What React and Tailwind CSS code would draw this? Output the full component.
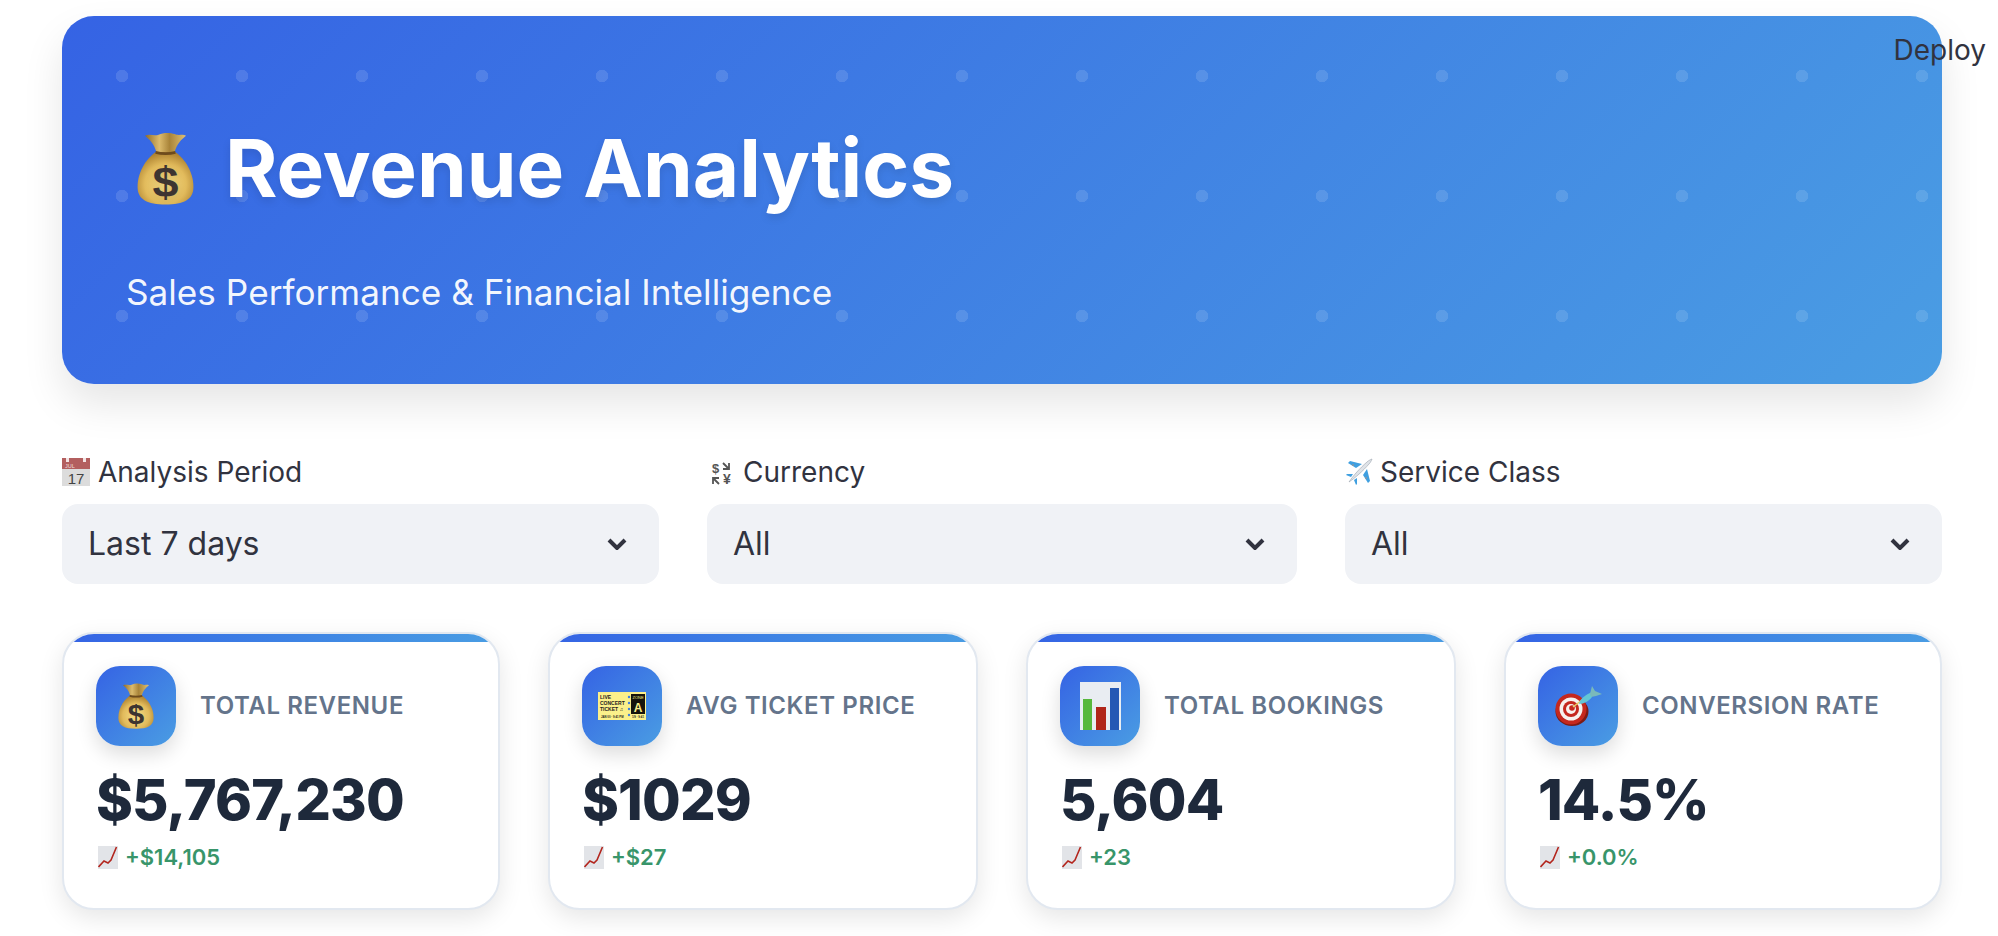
function Grads() {
  return (
    <svg width="0" height="0" className="absolute">
      <defs>
        <radialGradient id="bagBody" cx="50%" cy="62%" r="62%">
          <stop offset="0%" stopColor="#f7de86" />
          <stop offset="60%" stopColor="#e2bb5c" />
          <stop offset="100%" stopColor="#a87c2c" />
        </radialGradient>
        <linearGradient id="bagTop" x1="0" y1="0" x2="1" y2="0">
          <stop offset="0%" stopColor="#8d6a2a" />
          <stop offset="35%" stopColor="#dcbb6c" />
          <stop offset="60%" stopColor="#a98439" />
          <stop offset="100%" stopColor="#e0c274" />
        </linearGradient>
      </defs>
    </svg>
  );
}

function MoneyBag({ className }) {
  return (
    <svg viewBox="0 0 100 138" preserveAspectRatio="none" className={className}>
      <path d="M36 36 C20 46 1 72 1 104 C1 128 18 137 50 137 C82 137 99 128 99 104 C99 72 80 46 64 36Z" fill="url(#bagBody)" />
      <path d="M14 7 C22 3 30 8 38 5 C46 1 58 1 66 4 C74 8 80 3 86 7 C78 14 70 22 66 38 L34 38 C30 22 22 14 14 7Z" fill="url(#bagTop)" />
      <path d="M33 36 Q50 41 67 36 L68 41 Q50 46 32 41Z" fill="#6d4b1d" />
      <text x="50" y="122" textAnchor="middle" fontSize="82" fontWeight="700" fill="#3d3431" fontFamily="Liberation Sans, sans-serif">$</text>
    </svg>
  );
}

function CalendarIcon() {
  return (
    <svg viewBox="0 0 28 28" className="h-7 w-7 shrink-0">
      <rect x="0" y="0" width="28" height="28" fill="#dcdcdc" />
      <rect x="0" y="0" width="28" height="11" fill="#b35f5f" />
      <rect x="4" y="0" width="3" height="4" fill="#f3e4e4" />
      <rect x="21" y="0" width="3" height="4" fill="#f3e4e4" />
      <text x="3" y="9.5" fontSize="5.5" fill="#efdcdc" fontFamily="Liberation Sans, sans-serif">JUL</text>
      <text x="14" y="26" textAnchor="middle" fontSize="15" fill="#444" fontFamily="Liberation Sans, sans-serif">17</text>
    </svg>
  );
}

function ExchangeIcon() {
  return (
    <svg viewBox="0 -1 23 27" className="h-[27px] w-[23px] shrink-0">
      <text x="5.5" y="11" textAnchor="middle" fontSize="13" fontWeight="700" fill="#555" fontFamily="Liberation Sans, sans-serif">$</text>
      <text x="17" y="22" textAnchor="middle" fontSize="14" fontWeight="700" fill="#555" fontFamily="Liberation Sans, sans-serif">¥</text>
      <path d="M13 1l6 6M19 1v6h-6" fill="none" stroke="#555" strokeWidth="1.8" />
      <path d="M9 22l-6-6M3 22v-6h6" fill="none" stroke="#555" strokeWidth="1.8" />
    </svg>
  );
}

function PlaneIcon() {
  return (
    <svg viewBox="0 0 28 28" className="h-7 w-7 shrink-0">
      <path d="M11 10 L3 5 L5 3 L17 6Z" fill="#3f9fe0" />
      <path d="M18 17 L23 25 L25 23 L22 11Z" fill="#3f9fe0" />
      <path d="M6 19 L1 17 L2 16 L8 16Z" fill="#3f9fe0" />
      <path d="M9 22 L11 27 L12 26 L12 20Z" fill="#3f9fe0" />
      <path d="M4 24 C8 18 15 10 22 4 C24 2 27 1 27 1 C27 1 26 4 24 6 C18 13 10 20 4 24Z" fill="#dfe3e8" stroke="#9aa3ad" strokeWidth="0.6" />
      <circle cx="8" cy="7" r="1" fill="#8c96a0" />
      <circle cx="21" cy="20" r="1" fill="#8c96a0" />
    </svg>
  );
}

function TicketIcon() {
  return (
    <svg viewBox="0 0 48 28" className="h-7 w-12">
      <rect width="48" height="28" fill="#fbf08a" />
      <rect x="33" y="2" width="14" height="20" fill="#15130c" />
      <text x="40" y="7" textAnchor="middle" fontSize="4" fill="#fbf08a" fontFamily="Liberation Sans, sans-serif">ZONE</text>
      <text x="40" y="20" textAnchor="middle" fontSize="12" fontWeight="700" fill="#fbf08a" fontFamily="Liberation Sans, sans-serif">A</text>
      <g fontSize="5" fontWeight="700" fill="#222" fontFamily="Liberation Sans, sans-serif">
        <text x="2" y="7">LIVE</text>
        <text x="2" y="13">CONCERT</text>
        <text x="2" y="19">TICKET ♫</text>
      </g>
      <text x="3" y="26" fontSize="2.8" fontWeight="700" fill="#222" fontFamily="Liberation Sans, sans-serif">JAN 00 · 9:41 PM</text>
      <text x="34" y="26" fontSize="2.8" fontWeight="700" fill="#222" fontFamily="Liberation Sans, sans-serif">1/9 · 9:41</text>
      <g fill="#3f7fe0">
        <circle cx="31" cy="5" r="1.2" />
        <circle cx="31" cy="11" r="1.2" />
        <circle cx="31" cy="17" r="1.2" />
        <circle cx="31" cy="23" r="1.2" />
      </g>
    </svg>
  );
}

function BarsIcon() {
  return (
    <svg viewBox="0 0 41 48" className="h-12 w-[41px]">
      <rect width="41" height="48" fill="#e9edf2" />
      <rect x="3" y="17" width="9" height="31" fill="#58b83d" />
      <rect x="16" y="25" width="10" height="23" fill="#b0261a" />
      <rect x="30" y="6" width="9" height="42" fill="#2458b4" />
    </svg>
  );
}

function DartIcon() {
  return (
    <svg viewBox="0 0 48 40" className="h-10 w-12">
      <ellipse cx="18" cy="25.5" rx="16.5" ry="14.5" fill="#7e1a14" />
      <circle cx="17" cy="23" r="15.5" fill="#c5281e" />
      <circle cx="17" cy="23" r="11.5" fill="#f7f2ee" />
      <circle cx="17" cy="23" r="8" fill="#c5281e" />
      <circle cx="17" cy="23" r="5" fill="#f7f2ee" />
      <circle cx="18" cy="22" r="2.8" fill="#c5281e" />
      <path d="M19 21 L28 14" stroke="#e6cf63" strokeWidth="1.5" />
      <path d="M25 18 C26 12 34 7 39 6 L38 11 C35 15 30 18 25 18Z" fill="#62c6d6" />
      <path d="M36 8 L38 0 L41 5 L48 8 L42 10 L37 11Z" fill="#7ab9ba" />
    </svg>
  );
}

function ChartUpIcon() {
  return (
    <svg viewBox="0 0 20 23" className="ml-0.5 h-[23px] w-5 shrink-0">
      <rect width="20" height="23" fill="#e2e4e8" />
      <path d="M0.5 21 L6 15 L10 17 L13 14 L18.5 1" fill="none" stroke="#b3261e" strokeWidth="1.6" />
    </svg>
  );
}

function Chevron() {
  return (
    <svg viewBox="0 0 20 12" className="h-3 w-5">
      <path d="M2 2 L10 10 L18 2" fill="none" stroke="#31333f" strokeWidth="4" />
    </svg>
  );
}

function Filter({ icon, label, value }) {
  return (
    <div>
      <div className="flex h-9 items-center text-[28px] leading-9 text-[#31333f]">
        {icon}
        <span>{label}</span>
      </div>
      <div className="mt-[14px] flex h-20 items-center justify-between rounded-2xl bg-[#f0f2f6] pl-[26px] pr-[32px] text-[32px] text-[#31333f]">
        <span>{value}</span>
        <Chevron />
      </div>
    </div>
  );
}

const metrics = [
  { label: "TOTAL REVENUE", value: "$5,767,230", delta: "+$14,105", icon: <MoneyBag className="h-[46px] w-[36px]" /> },
  { label: "AVG TICKET PRICE", value: "$1029", delta: "+$27", icon: <TicketIcon /> },
  { label: "TOTAL BOOKINGS", value: "5,604", delta: "+23", icon: <BarsIcon /> },
  { label: "CONVERSION RATE", value: "14.5%", delta: "+0.0%", icon: <DartIcon /> },
];

function MetricCard({ label, value, delta, icon }) {
  return (
    <div className="overflow-hidden rounded-[32px] border-2 border-[#e2e8f0] bg-white shadow-[0_8px_24px_rgba(0,0,0,0.1)]">
      <div className="h-2 bg-gradient-to-r from-[#3563e4] to-[#4a9de3]" />
      <div className="px-8 pb-[35px] pt-6">
        <div className="flex items-center gap-6">
          <div className="flex h-20 w-20 shrink-0 items-center justify-center rounded-3xl bg-[linear-gradient(135deg,#3563e4,#4a9de3)] shadow-[0_8px_20px_rgba(0,0,0,0.14)]">
            {icon}
          </div>
          <div className="text-[24px] font-semibold tracking-[0.6px] text-[#64748b]">{label}</div>
        </div>
        <div className="mt-5 text-[56px] font-extrabold leading-[68px] tracking-[-0.85px] text-[#1e293b]">{value}</div>
        <div className="mt-[7px] flex h-8 items-center gap-[7px] text-[22px] font-semibold text-[#38956a]">
          <ChartUpIcon />
          <span>{delta}</span>
        </div>
      </div>
    </div>
  );
}

export default function App() {
  return (
    <div className="relative h-[936px] overflow-hidden bg-white pl-[62px] pr-[56px] pt-4 [font-family:Inter,sans-serif]">
      <Grads />

      {/* hero */}
      <div className="relative h-[368px] overflow-hidden rounded-[32px] bg-[linear-gradient(135deg,#3563e4,#4a9de3)] pl-[64px] pt-[104px] text-white shadow-[0_20px_40px_rgba(0,0,0,0.1)]">
        <div className="absolute inset-0 bg-[radial-gradient(circle_at_center,rgba(255,255,255,0.12)_6px,transparent_6.5px)] bg-[length:120px_120px]" />
        <h1 className="relative flex items-center text-[80px] font-bold leading-[96px] [text-shadow:0_4px_8px_rgba(0,0,0,0.1)]">
          <MoneyBag className="ml-[11px] mr-[31px] h-[73px] w-[57px]" />
          <span>Revenue Analytics</span>
        </h1>
        <p className="relative mt-[52px] text-[35.2px] leading-[48px] text-white/95">Sales Performance &amp; Financial Intelligence</p>
      </div>

      {/* filters */}
      <div className="mt-[70px] grid grid-cols-[597px_590px_597px] gap-12">
        <Filter icon={<span className="mr-2"><CalendarIcon /></span>} label="Analysis Period" value="Last 7 days" />
        <Filter icon={<span className="ml-[3px] mr-[10px] mt-[4px]"><ExchangeIcon /></span>} label="Currency" value="All" />
        <Filter icon={<span className="mr-[7px]"><PlaneIcon /></span>} label="Service Class" value="All" />
      </div>

      {/* metrics */}
      <div className="mt-12 grid grid-cols-[438px_430px_430px_438px] gap-12">
        {metrics.map((m) => (
          <MetricCard key={m.label} {...m} />
        ))}
      </div>

      <div className="absolute right-[12px] top-[32px] text-[28px] leading-9 text-[#31333f]">Deploy</div>
    </div>
  );
}
